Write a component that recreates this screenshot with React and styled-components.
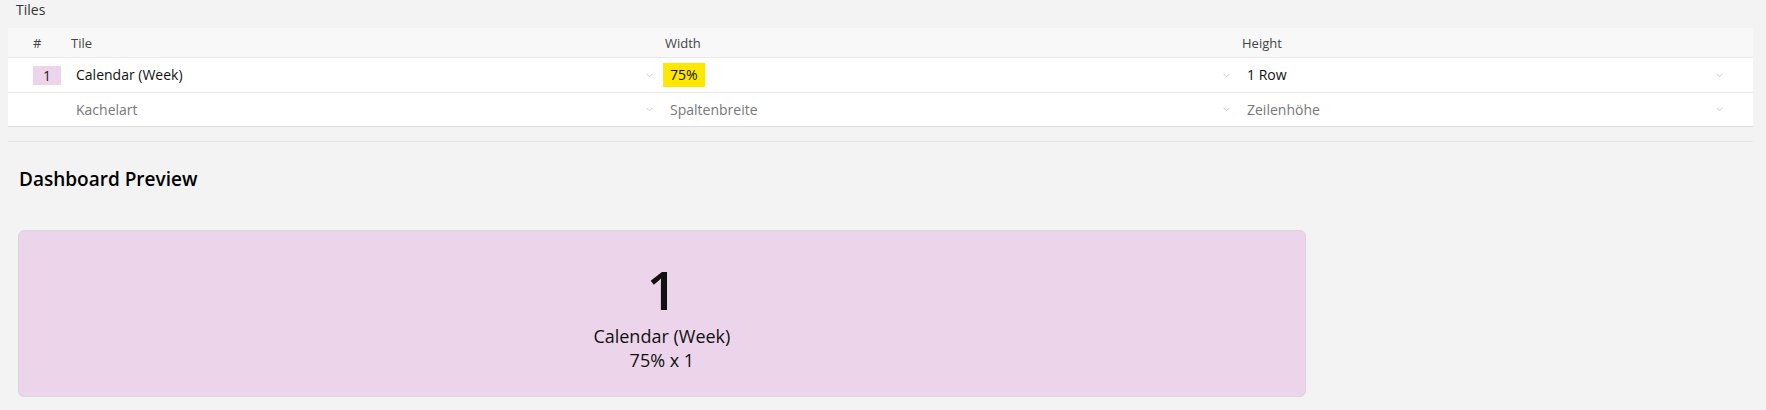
import React from 'react'
import styled, { createGlobalStyle } from 'styled-components'

const GlobalStyle = createGlobalStyle`
  html, body {
    margin: 0;
    background: #f3f3f3;
    font-family: "Open Sans", "Liberation Sans", sans-serif;
    color: #222;
  }
`

const Page = styled.div`
  padding: 0 13px 0 8px;
`

const SectionTitle = styled.div`
  padding-left: 8px;
  font-size: 14px;
  line-height: 19px;
  color: #333;
  margin-bottom: 9px;
`

const Table = styled.div`
  background: #fff;
  border-bottom: 1px solid #dedede;
`

const Row = styled.div`
  display: grid;
  grid-template-columns: 58px 594px 577px 493px 1fr;
  align-items: center;
  height: ${p => (p.$head ? '30px' : p.$last ? '33px' : '35px')};
  box-sizing: border-box;
  background: ${p => (p.$head ? '#f8f8f8' : '#fff')};
  border-bottom: ${p => (p.$last ? 'none' : '1px solid #e8e8e8')};
`

const HeadCell = styled.div`
  padding-left: ${p => (p.$index ? '25px' : '5px')};
  font-size: 13px;
  color: #444;
`

const IndexCell = styled.div`
  padding-left: 25px;
`

const Badge = styled.span`
  display: inline-flex;
  align-items: center;
  justify-content: center;
  width: 28px;
  height: 19px;
  background: #ecd5ea;
  font-size: 14px;
  color: #222;
`

const Select = styled.div`
  display: flex;
  align-items: center;
  justify-content: space-between;
  margin: 0 7px 0 3px;
  height: 24px;
`

const Value = styled.span`
  padding: 0 7px;
  line-height: 24px;
  font-size: 14px;
  color: ${p => (p.$placeholder ? '#777' : '#111')};
  background: ${p => (p.$highlight ? '#ffe800' : 'transparent')};
`

const Chevron = () => (
  <svg width="7" height="5" viewBox="0 0 7 5">
    <polyline points="0.5,0.8 3.5,3.8 6.5,0.8" fill="none" stroke="#c9c9c9" strokeWidth="1" />
  </svg>
)

const Divider = styled.div`
  margin-top: 14px;
  height: 1px;
  background: #e6e6e6;
`

const PreviewTitle = styled.h2`
  margin: 24px 0 0;
  padding-left: 11px;
  font-size: 19px;
  line-height: 27px;
  font-weight: 600;
  color: #000;
`

const PreviewGrid = styled.div`
  display: flex;
  margin-top: 37px;
  padding: 0 10px;
`

const TileCard = styled.div`
  width: calc(${p => p.$width}% - 6px);
  height: ${p => p.$rows * 167}px;
  box-sizing: border-box;
  border: 1px solid #ddd3dc;
  border-radius: 6px;
  background: #ecd5ea;
  display: flex;
  flex-direction: column;
  align-items: center;
  justify-content: center;
  padding-top: 8px;
  color: #111;
`

const TileNumber = styled.div`
  font-size: 53px;
  line-height: 53px;
  font-weight: 600;
  margin-bottom: 8px;
`

const TileLine = styled.div`
  font-size: 18px;
  line-height: 24px;
`

const SelectCell = ({ value, placeholder, highlight }) => (
  <Select>
    <Value $placeholder={!value} $highlight={highlight}>{value || placeholder}</Value>
    <Chevron />
  </Select>
)

const App = () => {
  const tiles = [{ id: 1, name: 'Calendar (Week)', width: '75%', height: '1 Row' }]

  return (
    <Page>
      <GlobalStyle />
      <SectionTitle>Tiles</SectionTitle>
      <Table>
        <Row $head>
          <HeadCell $index>#</HeadCell>
          <HeadCell>Tile</HeadCell>
          <HeadCell>Width</HeadCell>
          <HeadCell>Height</HeadCell>
          <div />
        </Row>
        {tiles.map(t => (
          <Row key={t.id}>
            <IndexCell><Badge>{t.id}</Badge></IndexCell>
            <SelectCell value={t.name} />
            <SelectCell value={t.width} highlight />
            <SelectCell value={t.height} />
            <div />
          </Row>
        ))}
        <Row $last>
          <IndexCell />
          <SelectCell placeholder='Kachelart' />
          <SelectCell placeholder='Spaltenbreite' />
          <SelectCell placeholder='Zeilenhöhe' />
          <div />
        </Row>
      </Table>
      <Divider />
      <PreviewTitle>Dashboard Preview</PreviewTitle>
      <PreviewGrid>
        {tiles.map(t => (
          <TileCard key={t.id} $width={75} $rows={1}>
            <TileNumber>{t.id}</TileNumber>
            <TileLine>{t.name}</TileLine>
            <TileLine>75% x 1</TileLine>
          </TileCard>
        ))}
      </PreviewGrid>
    </Page>
  )
}

export default App
